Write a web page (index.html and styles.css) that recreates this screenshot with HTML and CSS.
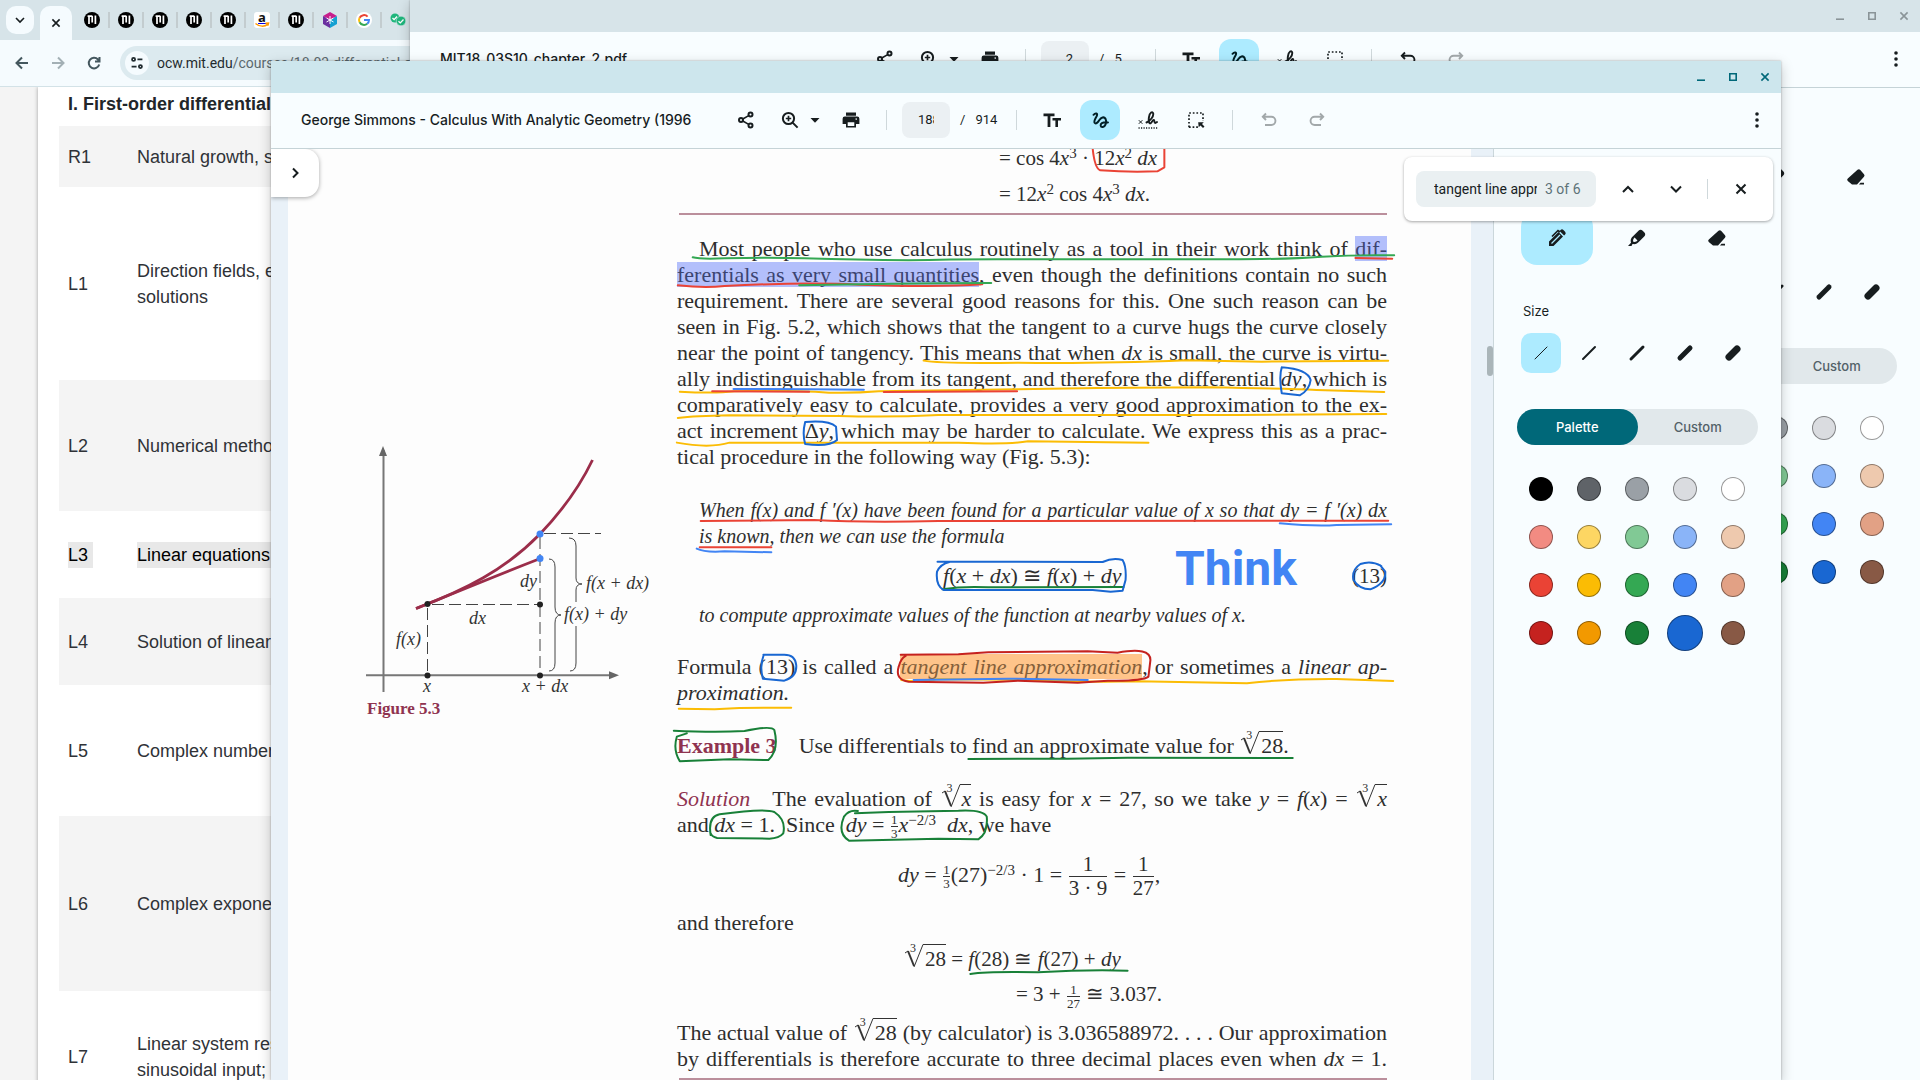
FILE: index.html
```html
<!DOCTYPE html>
<html lang="en">
<head>
<meta charset="utf-8">
<title>Desktop</title>
<link rel="stylesheet" href="styles.css">
</head>
<body>
<svg class="defs" aria-hidden="true">
  <symbol id="i-share" viewBox="0 0 20 20"><g fill="none" stroke="currentColor" stroke-width="2"><circle cx="14.5" cy="4.5" r="2"/><circle cx="14.5" cy="15.5" r="2"/><circle cx="5" cy="10" r="2"/><path d="M6.8 9L12.7 5.6M6.8 11l5.9 3.4" stroke-width="1.6"/></g></symbol>
  <symbol id="i-zoom" viewBox="0 0 20 20"><g fill="none" stroke="currentColor" stroke-width="2"><circle cx="8.5" cy="8.5" r="5.6"/><path d="M12.6 12.6l5 5"/><path d="M8.500 5.800v5.400M5.800 8.500h5.400" stroke-width="1.700"/></g></symbol>
  <symbol id="i-caret" viewBox="0 0 20 20"><path d="M5.500 8h9L10 12.800z" fill="currentColor"/></symbol>
  <symbol id="i-print" viewBox="0 0 20 20"><path fill="currentColor" fill-rule="evenodd" d="M5 2.500h10v3.200H5zM3.800 6.500h12.400a2.200 2.200 0 0 1 2.200 2.200V14H15v3.500H5V14H1.600V8.700a2.200 2.200 0 0 1 2.200-2.200zM6.700 12.300v3.600h6.600v-3.600zM15.200 8.300a.8.8 0 1 0 0 1.600.8.8 0 0 0 0-1.600z"/></symbol>
  <symbol id="i-text" viewBox="0 0 20 20"><path fill="currentColor" d="M1.500 3.500h11v2.800H8.400V17H5.600V6.300H1.500zM10.500 8H19v2.500h-3V17h-2.600v-6.500h-2.900z"/></symbol>
  <symbol id="i-draw" viewBox="0 0 20 20"><path fill="none" stroke="currentColor" stroke-width="2" stroke-linecap="round" d="M3.500 4.800C5.500 2.600 8 3.200 6.800 5.800 5.800 8 3.500 11 4.600 12.800c1.200 1.800 3.400-.6 4.800-2.800 1.800-2.600 4.600-3.600 6-1.400 1.600 2.900.3 8-2.600 8.400-2.600.3-2.800-2.600-.9-3.800 1.800-1.100 4.200-1.200 6.100-.8"/></symbol>
  <symbol id="i-sign" viewBox="0 0 20 20"><path fill="none" stroke="currentColor" stroke-width="1.900" stroke-linecap="round" d="M8.500 12.500c3.800-1.600 7.200-6 6.700-9-.5-2.600-3.600-1.200-4.300 4-.5 3.700.2 6.400 1.700 5.800 1.300-.6 1.900-3.200 3.200-3.400 1 0 .2 2.600 1.200 3 .6.200 1.200-.2 2-.8"/><path fill="none" stroke="currentColor" d="M.8 10.200l3.600 3.600M4.400 10.200L.8 13.800"/><path stroke="currentColor" stroke-width="1.300" stroke-dasharray="1.200 1.300" d="M.5 18h19"/></symbol>
  <symbol id="i-select" viewBox="0 0 20 20"><path fill="none" stroke="currentColor" stroke-width="1.700" stroke-dasharray="1.700 1.900" d="M3 17.200V3h14v8M3 17.200h9"/><path fill="currentColor" d="M12.200 12.200h5.600l-1.800 1.800 2.500 2.500-1.500 1.500-2.500-2.500-1.800 1.800z"/></symbol>
  <symbol id="i-undo" viewBox="0 0 20 20"><path fill="none" stroke="currentColor" stroke-width="1.900" d="M7 3.500L3.800 6.700 7 10M4 6.700h8.300a4.100 4.100 0 0 1 0 8.300H6"/></symbol>
  <symbol id="i-redo" viewBox="0 0 20 20"><path fill="none" stroke="currentColor" stroke-width="1.900" d="M13 3.500l3.200 3.200L13 10M16 6.700H7.700a4.100 4.100 0 0 0 0 8.300H14"/></symbol>
  <symbol id="i-more" viewBox="0 0 20 20"><g fill="currentColor"><circle cx="10" cy="4" r="1.800"/><circle cx="10" cy="10" r="1.800"/><circle cx="10" cy="16" r="1.800"/></g></symbol>
  <symbol id="i-min" viewBox="0 0 20 20"><path stroke="currentColor" stroke-width="2" d="M5 14h10"/></symbol>
  <symbol id="i-max" viewBox="0 0 20 20"><path fill="none" stroke="currentColor" stroke-width="2" d="M6 6h8v8H6z"/></symbol>
  <symbol id="i-close" viewBox="0 0 20 20"><path fill="none" stroke="currentColor" stroke-width="2" d="M5.500 5.500l9 9M14.500 5.500l-9 9"/></symbol>
  <symbol id="i-chev" viewBox="0 0 20 20"><path fill="none" stroke="currentColor" stroke-width="2" d="M8 5.500l4.500 4.500L8 14.500"/></symbol>
  <symbol id="i-up" viewBox="0 0 20 20"><path fill="none" stroke="currentColor" stroke-width="2" d="M5 13l5-5 5 5"/></symbol>
  <symbol id="i-down" viewBox="0 0 20 20"><path fill="none" stroke="currentColor" stroke-width="2" d="M5 7.500l5 5 5-5"/></symbol>
  <symbol id="i-pen" viewBox="0 0 20 20"><path fill="currentColor" d="M2 18v-4.500L11.500 4l4.500 4.500L6.500 18zM12.600 3l1-1a2 2 0 0 1 2.800 0l1.700 1.700a2 2 0 0 1 0 2.800l-1 1z"/><path fill="none" stroke="currentColor" stroke-width="1.700" d="M5 8.500l6-6 2 1.500"/><path stroke="#adebff" stroke-width="1.300" d="M4.500 15.500l8.500-8.500"/></symbol>
  <symbol id="i-marker" viewBox="0 0 20 20"><path fill="currentColor" fill-rule="evenodd" d="M1 18l3-3.200c-1-3.500.6-5.200 2-6.500l5.500-5.500a3 3 0 0 1 4.200 0l1.500 1.500a3 3 0 0 1 0 4.200L11.700 14c-1.300 1.300-3 2.600-6.200 2L4.500 18zM6.200 13.800c2.300.4 3.600-.6 4.300-1.300L7.600 9.600c-.9.900-1.900 2.200-1.400 4.200z"/></symbol>
  <symbol id="i-eraser" viewBox="0 0 20 20"><path fill="currentColor" d="M1.800 11.500l9.700-8.700a2 2 0 0 1 2.800.1l3.700 4.300a2 2 0 0 1 0 2.600L11 17.500H6L1.800 14a1.700 1.700 0 0 1 0-2.500zM14.500 15.800H18v1.700h-5z"/></symbol>
  <symbol id="fav-mit" viewBox="0 0 16 16"><circle cx="8" cy="8" r="8"/><path stroke="#fff" stroke-width="1.700" fill="none" d="M3.600 4.200h4.800M5 4v8M8.200 4v6.500M11.400 3.500v8.500"/></symbol>
  <symbol id="i-root" viewBox="0 0 22 24"><path fill="none" stroke="#333" d="M2 9l3-2"/><path fill="none" stroke="#333" stroke-width="2" d="M5 7l6 15"/><path fill="none" stroke="#333" d="M11 23L20 .5h2"/></symbol>
</svg>

<div class="desktop">
  <section class="browser">
    <nav class="tabs" aria-label="Tabs">
      <button class="tabsearch" aria-label="Search tabs"><svg class="ic"><use href="#i-down"/></svg></button>
      <button class="tab-active" aria-label="Close tab"><svg class="ic"><use href="#i-close"/></svg></button>
      <a class="tab" href="#" aria-label="MIT OCW"><svg class="fav"><use href="#fav-mit"/></svg></a>
      <a class="tab" href="#" aria-label="MIT OCW"><svg class="fav"><use href="#fav-mit"/></svg></a>
      <a class="tab" href="#" aria-label="MIT OCW"><svg class="fav"><use href="#fav-mit"/></svg></a>
      <a class="tab" href="#" aria-label="MIT OCW"><svg class="fav"><use href="#fav-mit"/></svg></a>
      <a class="tab" href="#" aria-label="MIT OCW"><svg class="fav"><use href="#fav-mit"/></svg></a>
      <a class="tab" href="#" aria-label="Amazon"><span class="fav amazon">a<svg viewBox="0 0 16 16"><path fill="none" stroke="#f90" stroke-width="1.500" d="M1.500 11.500c4 3.400 9 3.400 12.500.6M11.500 11.300l3-.3-.6 2.600"/></svg></span></a>
      <a class="tab" href="#" aria-label="MIT OCW"><svg class="fav"><use href="#fav-mit"/></svg></a>
      <a class="tab" href="#" aria-label="Cube"><svg class="fav" viewBox="0 0 16 16"><path fill="#c81e8c" d="M8 0l7 4-7 4-7-4z"/><path fill="#6a2fa0" d="M1 4l7 4v8l-7-4z"/><path fill="#14a0d2" d="M15 4L8 8v8l7-4z"/><path stroke="#fff" d="M8 4v8M4.500 6l7 4M11.500 6l-7 4"/></svg></a>
      <a class="tab" href="#" aria-label="Google"><svg class="fav" viewBox="0 0 16 16"><circle cx="8" cy="8" r="8" fill="#fff"/><g fill="none" stroke-width="2"><path stroke="#ea4335" d="M11.600 4.600A5 5 0 0 0 3.600 5.800"/><path stroke="#fbbc04" d="M3.600 5.700a5 5 0 0 0 0 4.600"/><path stroke="#34a853" d="M3.600 10.200a5 5 0 0 0 7.600 1.600"/><path stroke="#4285f4" d="M11.200 11.800A5 5 0 0 0 13 8H8"/></g></svg></a>
      <a class="tab" href="#" aria-label="Checks"><svg class="fav" viewBox="0 0 16 16"><circle cx="5" cy="6" r="4.500" fill="#1fb67c"/><circle cx="11" cy="9" r="4.800" fill="#1fb67c" stroke="#d7e4e9" stroke-width=".6"/><path fill="none" stroke="#fff" stroke-width="1.300" d="M2.500 6l1.600 1.600L7 4.500M8.500 9.200l1.800 1.700L13.500 7.500"/></svg></a>
    </nav>
    <div class="navbar">
      <button class="nav-btn" aria-label="Back"><svg class="ic" viewBox="0 0 20 20"><path fill="none" stroke="#44575e" stroke-width="2" d="M16 10H5M10 4.500L4.500 10l5.500 5.500"/></svg></button>
      <button class="nav-btn" aria-label="Forward"><svg class="ic" viewBox="0 0 20 20"><path fill="none" stroke="#a3b0b5" stroke-width="2" d="M4 10h11M10 4.500l5.500 5.500-5.500 5.500"/></svg></button>
      <button class="nav-btn" aria-label="Reload"><svg class="ic" viewBox="0 0 20 20"><path fill="none" stroke="#44575e" stroke-width="2" d="M15.200 11.500A5.300 5.300 0 1 1 14 6.500L15.500 8M15.500 4v4.500H11"/></svg></button>
      <div class="omnibox"><span class="site"><svg class="ic" viewBox="0 0 20 20"><g fill="none" stroke="#1f2a2e" stroke-width="2"><circle cx="6.200" cy="6" r="1.700"/><path d="M10.500 6H16M4 14h5.500"/><circle cx="13.800" cy="14" r="1.700"/></g></svg></span><span class="url"><b>ocw.mit.edu</b>/courses/18-03-differential-equations</span></div>
    </div>
    <main class="web">
      <div class="sheet">
        <h2>I. First-order differential equations</h2>
        <table>
          <tr class="h61"><th>R1</th><td>Natural growth, separable equations</td></tr>
          <tr class="h193"><th>L1</th><td>Direction fields, existence and uniqueness of<br>solutions</td></tr>
          <tr class="h131"><th>L2</th><td>Numerical methods</td></tr>
          <tr class="h87"><th><mark>L3&nbsp;</mark></th><td><mark>Linear equations, models</mark></td></tr>
          <tr class="h87"><th>L4</th><td>Solution of linear equations</td></tr>
          <tr class="h131"><th>L5</th><td>Complex numbers, roots of unity</td></tr>
          <tr class="h175"><th>L6</th><td>Complex exponentials</td></tr>
          <tr class="h131"><th>L7</th><td>Linear system response to exponential and<br>sinusoidal input; gain</td></tr>
        </table>
      </div>
    </main>
  </section>

  <section class="win win-back">
    <header class="titlebar"><button aria-label="Minimize"><svg class="ic"><use href="#i-min"/></svg></button><button aria-label="Maximize"><svg class="ic"><use href="#i-max"/></svg></button><button aria-label="Close"><svg class="ic"><use href="#i-close"/></svg></button></header>
    <div class="toolbar">
      <h1>MIT18_03S10_chapter_2.pdf</h1>
      <button class="tb" aria-label="Share"><svg class="ic"><use href="#i-share"/></svg></button>
      <button class="tb zoom" aria-label="Zoom"><svg class="ic"><use href="#i-zoom"/></svg><svg class="ic"><use href="#i-caret"/></svg></button>
      <button class="tb" aria-label="Print"><svg class="ic"><use href="#i-print"/></svg></button>
      <i class="sep"></i>
      <label class="pager"><input aria-label="Page" value="2"><span>/</span><span>5</span></label>
      <i class="sep"></i>
      <div class="modes"><button class="tb" aria-label="Select text"><svg class="ic"><use href="#i-text"/></svg></button><button class="tb on" aria-label="Annotate"><svg class="ic"><use href="#i-draw"/></svg></button><button class="tb" aria-label="Sign"><svg class="ic"><use href="#i-sign"/></svg></button><button class="tb" aria-label="Select area"><svg class="ic"><use href="#i-select"/></svg></button></div>
      <i class="sep"></i>
      <div class="modes"><button class="tb" aria-label="Undo"><svg class="ic"><use href="#i-undo"/></svg></button><button class="tb off" aria-label="Redo"><svg class="ic"><use href="#i-redo"/></svg></button></div>
      <button class="tb more" aria-label="More"><svg class="ic"><use href="#i-more"/></svg></button>
    </div>
    <div class="viewer">
      <div class="scroller"></div>
      <aside class="panel">
        <div class="tools"><button class="on" aria-label="Pen"><svg class="ic"><use href="#i-pen"/></svg></button><button aria-label="Highlighter"><svg class="ic"><use href="#i-marker"/></svg></button><button aria-label="Eraser"><svg class="ic"><use href="#i-eraser"/></svg></button></div>
        <h3>Size</h3>
        <div class="sizes"><button class="on" aria-label="Size 1"><svg class="ic s1"><path d="M4 16L16 4"/></svg></button><button aria-label="Size 2"><svg class="ic s2"><path d="M4 16L16 4"/></svg></button><button aria-label="Size 3"><svg class="ic s3"><path d="M4 16L16 4"/></svg></button><button aria-label="Size 4"><svg class="ic s4"><path d="M5 15L15 5"/></svg></button><button aria-label="Size 5"><svg class="ic s5"><path d="M6 14L14 6"/></svg></button></div>
        <div class="seg"><button class="on">Palette</button><button>Custom</button></div>
        <div class="swatches">
          <input type="radio" name="b" aria-label="Black" class="c1"><input type="radio" name="b" aria-label="Dark grey" class="c2"><input type="radio" name="b" aria-label="Grey" class="c3"><input type="radio" name="b" aria-label="Light grey" class="c4"><input type="radio" name="b" aria-label="White" class="c5">
          <input type="radio" name="b" aria-label="Light red" class="c6"><input type="radio" name="b" aria-label="Light yellow" class="c7"><input type="radio" name="b" aria-label="Light green" class="c8"><input type="radio" name="b" aria-label="Light blue" class="c9"><input type="radio" name="b" aria-label="Light tan" class="c10">
          <input type="radio" name="b" aria-label="Red" class="c11"><input type="radio" name="b" aria-label="Yellow" class="c12"><input type="radio" name="b" aria-label="Green" class="c13"><input type="radio" name="b" aria-label="Blue" class="c14"><input type="radio" name="b" aria-label="Tan" class="c15">
          <input type="radio" name="b" aria-label="Dark red" class="c16"><input type="radio" name="b" aria-label="Orange" class="c17"><input type="radio" name="b" aria-label="Dark green" class="c18"><input type="radio" name="b" aria-label="Dark blue" class="c19"><input type="radio" name="b" aria-label="Brown" class="c20">
        </div>
      </aside>
    </div>
  </section>

  <section class="win win-front">
    <header class="titlebar"><button aria-label="Minimize"><svg class="ic"><use href="#i-min"/></svg></button><button aria-label="Maximize"><svg class="ic"><use href="#i-max"/></svg></button><button aria-label="Close"><svg class="ic"><use href="#i-close"/></svg></button></header>
    <div class="toolbar">
      <h1>George Simmons - Calculus With Analytic Geometry (1996</h1>
      <button class="tb" aria-label="Share"><svg class="ic"><use href="#i-share"/></svg></button>
      <button class="tb zoom" aria-label="Zoom"><svg class="ic"><use href="#i-zoom"/></svg><svg class="ic"><use href="#i-caret"/></svg></button>
      <button class="tb" aria-label="Print"><svg class="ic"><use href="#i-print"/></svg></button>
      <i class="sep"></i>
      <label class="pager"><input aria-label="Page" value="188"><span>/</span><span>914</span></label>
      <i class="sep"></i>
      <div class="modes"><button class="tb" aria-label="Select text"><svg class="ic"><use href="#i-text"/></svg></button><button class="tb on" aria-label="Annotate"><svg class="ic"><use href="#i-draw"/></svg></button><button class="tb" aria-label="Sign"><svg class="ic"><use href="#i-sign"/></svg></button><button class="tb" aria-label="Select area"><svg class="ic"><use href="#i-select"/></svg></button></div>
      <i class="sep"></i>
      <div class="modes"><button class="tb off" aria-label="Undo"><svg class="ic"><use href="#i-undo"/></svg></button><button class="tb off" aria-label="Redo"><svg class="ic"><use href="#i-redo"/></svg></button></div>
      <button class="tb more" aria-label="More"><svg class="ic"><use href="#i-more"/></svg></button>
    </div>
    <div class="viewer">
      <div class="scroller">
        <article class="page">
          <figure>
            <svg class="plot" viewBox="0 0 320 275">
              <g stroke="#777" stroke-width="2"><path d="M43.500 30V272M26 255.300H272"/></g>
              <path fill="#666" d="M43 26l4 10h-8zM279 255.300l-10 4v-8z"/>
              <g fill="none" stroke="#444" stroke-dasharray="12 5"><path d="M92 184.500H200M87.500 188V255M200 117V255M204 113.500H261"/></g>
              <g fill="none" stroke="#9b2d4a" stroke-width="2.800"><path d="M76 188.500C125 170 165 150 200 114C222 91 240 66 252.500 40"/><path d="M76 188.500C100 179 140 162 199 139"/></g>
              <g fill="none" stroke="#444"><path d="M209 139q6 0 6 8v40q0 8 6 8-6 0-6 8v40q0 8-6 8"/><path d="M229 118q7 0 7 8v32q0 6 6 6-6 0-6 6v12M236 206v37q0 8-6 8"/></g>
              <g fill="#222"><circle cx="87.500" cy="184" r="3"/><circle cx="200" cy="184.500" r="3"/><circle cx="87.500" cy="255.500" r="3"/><circle cx="200" cy="255.500" r="3"/></g>
              <g fill="#4285f4"><circle cx="200" cy="114" r="3.500"/><circle cx="200" cy="138.500" r="3.500"/></g>
              <g class="plot-text"><text x="180" y="167">dy</text><text x="129" y="204">dx</text><text x="56" y="225">f(x)</text><text x="246" y="169">f(x + dx)</text><text x="224" y="200">f(x) + dy</text><text x="83" y="272">x</text><text x="182" y="272">x + dx</text></g>
            </svg>
            <figcaption>Figure 5.3</figcaption>
          </figure>
          <div class="column">
            <p class="eq e-cos">= cos 4<i>x</i><sup>3</sup> · 12<i>x</i><sup>2</sup> <i>dx</i></p>
            <p class="eq e-cos g10">= 12<i>x</i><sup>2</sup> cos 4<i>x</i><sup>3</sup> <i>dx</i>.</p>
            <hr>
            <p class="g21 just"><span class="indent">Most people who use calculus routinely as a tool in their work think of <mark class="blue">dif-</mark></span><span><mark class="blue">ferentials as very small quantities</mark>, even though the definitions contain no such</span><span>requirement. There are several good reasons for this. One such reason can be</span><span>seen in Fig. 5.2, which shows that the tangent to a curve hugs the curve closely</span><span>near the point of tangency. This means that when <i>dx</i> is small, the curve is virtu-</span><span>ally indistinguishable from its tangent, and therefore the differential <i>dy</i>, which is</span><span>comparatively easy to calculate, provides a very good approximation to the ex-</span><span>act increment Δ<i>y</i>, which may be harder to calculate. We express this as a prac-</span><span class="last">tical procedure in the following way (Fig. 5.3):</span></p>
            <p class="just hyp g27"><span>When f(x) and f ′(x) have been found for a particular value of x so that dy = f ′(x) dx</span><span class="last">is known, then we can use the formula</span></p>
            <div class="formula g14"><p class="eq wide"><i>f</i>(<i>x</i> + <i>dx</i>) ≅ <i>f</i>(<i>x</i>) + <i>dy</i></p><strong>Think</strong><span class="eq">(13)</span></div>
            <p class="hyp g13">to compute approximate values of the function at nearby values of x.</p>
            <p class="just g26"><span>Formula (13) is called a <mark class="orange"><i>tangent line approximation</i></mark>, or sometimes a <i>linear ap-</i></span><span class="last"><i>proximation.</i></span></p>
            <p class="g27 line"><b class="wine">Example 3</b><span class="em">Use differentials to find an approximate value for <sup class="idx">3</sup><svg class="root"><use href="#i-root"/></svg><span class="bar">28</span>.</span></p>
            <p class="just g27"><span><i class="wine soln">Solution</i>The evaluation of <sup class="idx">3</sup><svg class="root"><use href="#i-root"/></svg><span class="bar"><i>x</i></span> is easy for <i>x</i> = 27, so we take <i>y</i> = <i>f</i>(<i>x</i>) = <sup class="idx">3</sup><svg class="root"><use href="#i-root"/></svg><span class="bar"><i>x</i></span></span><span class="last">and <i>dx</i> = 1.&nbsp; Since&nbsp; <i>dy</i> = <span class="frac"><span>1</span><span>3</span></span><i>x</i><sup>−2/3</sup>&nbsp; <i>dx</i>, we have</span></p>
            <p class="eq wide e-dy g24"><i>dy</i> = <span class="frac"><span>1</span><span>3</span></span>(27)<sup>−2/3</sup> · 1 = <span class="frac big"><span>1</span><span>3 · 9</span></span> = <span class="frac big"><span>1</span><span>27</span></span>,</p>
            <p class="line g22">and therefore</p>
            <p class="eq e-root g10"><sup class="idx">3</sup><svg class="root"><use href="#i-root"/></svg><span class="bar">28</span> = <i>f</i>(28) ≅ <i>f</i>(27) + <i>dy</i></p>
            <p class="eq e-three g9">= 3 + <span class="frac"><span>1</span><span>27</span></span> ≅ 3.037.</p>
            <p class="just g13"><span>The actual value of <sup class="idx">3</sup><svg class="root"><use href="#i-root"/></svg><span class="bar">28</span> (by calculator) is 3.036588972. . . . Our approximation</span><span>by differentials is therefore accurate to three decimal places even when <i>dx</i> = 1.</span></p>
            <hr>
          </div>
          <svg class="ink" viewBox="288 149 1183 931" aria-hidden="true">
            <g transform="translate(640 130) scale(.4975 .3333)">
              <path class="red" d="M910 57Q914 115 925 121Q985 128 1040 124L1054 112V57M1438 384L1512 386M76 466Q130 475 170 468Q330 456 440 464Q600 472 688 463"/>
              <path class="green" d="M106 382Q120 388 170 385Q260 382 330 385Q440 390 540 391Q650 386 800 388L1180 388Q1300 388 1370 380Q1440 374 1516 376M320 466Q500 460 706 459"/>
              <path class="amber" d="M570 692Q600 701 760 698Q900 702 1100 691L1250 695L1504 692M80 785Q150 791 190 784Q300 780 380 788Q430 790 480 784L760 778L920 774L1140 772Q1300 776 1360 780L1496 786M76 864Q110 858 180 856L400 858Q500 863 600 855L1200 855L1500 852M74 938Q140 956 180 938L640 938Q740 944 780 934L1022 938"/>
              <path class="red" d="M145 784L340 785M490 786L758 784"/>
              <path class="sky" d="M188 777L345 778L450 779"/>
              <path class="blue" d="M1290 712Q1342 718 1348 750Q1346 780 1326 796L1290 790Q1284 740 1290 712M332 876Q380 870 394 890L396 930Q380 952 332 942Q326 910 332 876"/>
            </g>
            <g transform="translate(640 460) scale(.4975 .3333)">
              <path class="red" d="M122 183L350 180Q450 188 600 183L1504 182M120 262H264"/>
              <path class="sky" d="M1286 190Q1360 200 1400 195L1510 193M114 266Q130 278 170 274L264 277"/>
              <path class="green2" d="M608 388Q650 378 700 382L972 381"/>
              <path class="blue" d="M598 305L930 306Q950 292 970 300Q978 320 976 360L970 392L946 395L910 390L610 390Q594 376 597 335Q604 312 622 306M1490 318Q1470 300 1448 312Q1430 330 1434 360Q1446 388 1468 388Q1500 370 1498 335L1488 316M248 588Q240 620 247 656L290 662Q316 650 314 615Q312 584 290 584L248 584"/>
              <path class="amber" d="M525 660Q560 668 600 658L800 660Q900 668 1000 664L1220 670Q1300 656 1400 657L1514 663M78 746L150 748L200 744L304 743"/>
              <path class="sky" d="M550 660L740 656L900 660"/>
              <path class="crimson" d="M524 584L640 583L700 577L900 574L960 578Q1026 560 1026 600L1022 650Q1010 664 940 662L880 668L760 662L690 668L540 665Q512 660 520 620Q524 596 534 588"/>
            </g>
            <g transform="translate(640 720) scale(.4975 .3333)">
              <path class="green2" d="M68 32Q150 38 210 33Q264 16 270 30Q280 90 258 120L180 118L80 124Q66 90 74 50L94 40M660 117L860 116L980 113L1312 114M142 345Q136 290 160 283Q250 264 270 276Q294 300 288 340Q280 354 260 356L155 354Q144 350 142 340M438 273Q420 268 410 290Q396 340 420 362L600 356L680 358Q700 340 697 290Q690 268 640 272L500 276L432 280M664 762Q700 754 800 757Q900 748 980 752"/>
            </g>
          </svg>
        </article>
        <i class="thumb"></i>
      </div>
      <aside class="panel">
        <div class="tools"><button class="on" aria-label="Pen"><svg class="ic"><use href="#i-pen"/></svg></button><button aria-label="Highlighter"><svg class="ic"><use href="#i-marker"/></svg></button><button aria-label="Eraser"><svg class="ic"><use href="#i-eraser"/></svg></button></div>
        <h3>Size</h3>
        <div class="sizes"><button class="on" aria-label="Size 1"><svg class="ic s1"><path d="M4 16L16 4"/></svg></button><button aria-label="Size 2"><svg class="ic s2"><path d="M4 16L16 4"/></svg></button><button aria-label="Size 3"><svg class="ic s3"><path d="M4 16L16 4"/></svg></button><button aria-label="Size 4"><svg class="ic s4"><path d="M5 15L15 5"/></svg></button><button aria-label="Size 5"><svg class="ic s5"><path d="M6 14L14 6"/></svg></button></div>
        <div class="seg"><button class="on">Palette</button><button>Custom</button></div>
        <div class="swatches">
          <input type="radio" name="f" aria-label="Black" class="c1"><input type="radio" name="f" aria-label="Dark grey" class="c2"><input type="radio" name="f" aria-label="Grey" class="c3"><input type="radio" name="f" aria-label="Light grey" class="c4"><input type="radio" name="f" aria-label="White" class="c5">
          <input type="radio" name="f" aria-label="Light red" class="c6"><input type="radio" name="f" aria-label="Light yellow" class="c7"><input type="radio" name="f" aria-label="Light green" class="c8"><input type="radio" name="f" aria-label="Light blue" class="c9"><input type="radio" name="f" aria-label="Light tan" class="c10">
          <input type="radio" name="f" aria-label="Red" class="c11"><input type="radio" name="f" aria-label="Yellow" class="c12"><input type="radio" name="f" aria-label="Green" class="c13"><input type="radio" name="f" aria-label="Blue" class="c14"><input type="radio" name="f" aria-label="Tan" class="c15">
          <input type="radio" name="f" aria-label="Dark red" class="c16"><input type="radio" name="f" aria-label="Orange" class="c17"><input type="radio" name="f" aria-label="Dark green" class="c18"><input type="radio" name="f" aria-label="Dark blue" class="c19" checked><input type="radio" name="f" aria-label="Brown" class="c20">
        </div>
      </aside>
      <button class="expand" aria-label="Open side bar"><svg class="ic"><use href="#i-chev"/></svg></button>
      <form class="find"><label class="findbox"><input aria-label="Find" value="tangent line approximation"><span>3 of 6</span></label><button type="button" aria-label="Previous"><svg class="ic"><use href="#i-up"/></svg></button><button type="button" aria-label="Next"><svg class="ic"><use href="#i-down"/></svg></button><i class="sep"></i><button type="button" aria-label="Close find"><svg class="ic"><use href="#i-close"/></svg></button></form>
    </div>
  </section>
</div>
</body>
</html>
```
FILE: styles.css
```css
* { box-sizing: border-box; }
html, body { height: 100%; margin: 0; }
body { overflow: hidden; font: 14px/20px Inter, Roboto, sans-serif; color: #171d1f; }
h1, h2, h3, p, figure { margin: 0; }
button { border: 0; padding: 0; background: none; color: inherit; font: inherit; display: flex; align-items: center; justify-content: center; }
.defs { display: none; }
.ic { width: 20px; height: 20px; flex: none; display: block; }
.desktop { position: relative; height: 100%; overflow: hidden; }

/* browser window */
.browser { height: 100%; display: flex; flex-direction: column; background: #f4f4f4; }
.tabs { height: 40px; background: #d7e4e9; display: flex; align-items: center; padding-left: 6px; flex: none; }
.tabsearch { width: 28px; height: 28px; border-radius: 10px; background: #f5fbfe; margin-right: 6px; }
.tab-active { width: 32px; height: 34px; align-self: flex-end; border-radius: 10px 10px 0 0; background: #f5fbfe; margin-right: 4px; }
.tabs .ic { width: 16px; height: 16px; }
.tab { width: 34px; height: 16px; display: flex; align-items: center; justify-content: center; border-right: 2px solid #c3cccf; }
.fav { width: 16px; height: 16px; display: block; }
.amazon { position: relative; background: #fff; border-radius: 3px; color: #111; font: bold 13px/10px "Open Sans", sans-serif; text-align: center; }
.amazon svg { position: absolute; inset: 0; }
.navbar { height: 47px; background: #f5fbfe; border-bottom: 1px solid #d3e2e7; display: flex; align-items: center; padding-left: 4px; flex: none; }
.nav-btn { width: 36px; height: 36px; }
.omnibox { flex: 1; height: 34px; margin-left: 8px; border-radius: 17px; background: #dceaef; display: flex; align-items: center; padding-left: 5px; font: 14px/20px Roboto, sans-serif; color: #5b686d; white-space: nowrap; }
.site { width: 24px; height: 24px; border-radius: 12px; background: #f5fbfe; display: flex; align-items: center; justify-content: center; margin-right: 8px; }
.site .ic { width: 18px; height: 18px; }
.url b { font-weight: 400; color: #1f2a2e; }
.web { flex: 1; min-height: 0; overflow: hidden; padding-left: 38px; }
.sheet { background: #fff; box-shadow: 0 0 4px rgba(0,0,0,.35); padding-left: 21px; font: 18px/26px "Liberation Sans", Arial, sans-serif; color: #2f3237; }
.sheet h2 { font-size: 18px; line-height: 26px; padding: 4px 0 9px 9px; color: #22262a; }
.sheet table { border-collapse: collapse; width: 100%; }
.sheet th, .sheet td { padding: 0 9px; vertical-align: middle; text-align: left; font-weight: 400; }
.sheet th { width: 69px; }
.sheet mark { background: #e8e8e8; color: #000; display: inline-block; }
.sheet tr:nth-child(odd) { background: #f4f4f4; }
.h61 { height: 61px; } .h87 { height: 87px; } .h131 { height: 131px; } .h175 { height: 175px; } .h193 { height: 193px; }

/* document windows */
.win { position: absolute; bottom: 0; display: flex; flex-direction: column; background: #f8fdff; box-shadow: 0 0 2px rgba(0,0,0,.3), 0 4px 12px rgba(0,0,0,.22); }
.win-back { left: 410px; right: 0; top: 0; }
.win-front { left: 271px; right: 139px; top: 61px; }
.titlebar { height: 32px; flex: none; display: flex; justify-content: flex-end; align-items: center; background: #d7e4e9; color: #8a9498; }
.win-front .titlebar { background: #cde6ed; color: #006879; }
.titlebar button { width: 32px; height: 32px; }
.titlebar .ic { width: 16px; height: 16px; }
.toolbar { height: 56px; flex: none; display: flex; align-items: center; border-bottom: 1px solid #c5d3d7; padding: 0 4px 2px 30px; }
.toolbar h1 { width: 392px; margin-right: 33px; font-size: 14px; font-weight: 500; white-space: nowrap; overflow: hidden; }
.tb { width: 40px; height: 40px; flex: none; border-radius: 12px; }
.tb.on { background: #adebff; color: #001f26; }
.tb.off { color: #a2a8aa; }
.zoom { width: 58px; margin: 0 3px 0 4px; justify-content: flex-start; padding-left: 10px; gap: 5px; }
.sep { width: 1px; height: 20px; flex: none; background: #cfd8db; }
.toolbar > .sep { margin: 0 15px; }
.toolbar > .modes + .sep { margin: 0 16px; }
.pager { width: 99px; display: flex; align-items: center; gap: 10px; font: 13px/20px Roboto, sans-serif; }
.pager input { width: 48px; height: 36px; border: 0; border-radius: 8px; background: #ebf0f3; padding: 0 16px; font: inherit; color: inherit; text-align: right; }
.modes { display: flex; gap: 8px; }
.more { margin-left: auto; }
.viewer { flex: 1; min-height: 0; display: flex; position: relative; overflow: hidden; }
.scroller { flex: 1; min-width: 0; display: flex; background: #e9f1f8; padding: 0 22px 0 17px; position: relative; overflow: hidden; }
.thumb { position: absolute; right: 0; top: 197px; width: 6px; height: 30px; border-radius: 3px; background: #aab5b9; }

.panel { width: 288px; flex: none; border-left: 1px solid #cbd7db; padding: 62px 23px 0; }
.tools { display: flex; gap: 8px; padding-left: 4px; }
.tools button { width: 72px; height: 54px; border-radius: 16px; }
.panel .on { background: #adebff; }
.panel h3 { font-size: 13px; line-height: 20px; font-weight: 400; margin: 36px 0 12px 6px; }
.sizes { display: flex; gap: 8px; padding-left: 4px; }
.sizes button { width: 40px; height: 40px; border-radius: 10px; }
.sizes path { stroke: #171d1f; stroke-linecap: round; }
.s1 path { stroke-width: 1; } .s2 path { stroke-width: 2; } .s3 path { stroke-width: 3; } .s4 path { stroke-width: 5; } .s5 path { stroke-width: 7; }
.seg { display: flex; margin-top: 36px; border-radius: 18px; background: #e1e8eb; color: #526168; font-weight: 500; font-size: 13px; }
.seg button { flex: 1; height: 36px; border-radius: 18px; }
.panel .seg .on { background: #006879; color: #fff; }
.swatches { display: grid; grid-template-columns: repeat(5, 48px); grid-auto-rows: 48px; place-items: center; margin-top: 20px; }
.swatches input { appearance: none; margin: 0; width: 24px; height: 24px; border-radius: 50%; border: 1px solid rgba(0,0,0,.4); }
.swatches input:checked { width: 36px; height: 36px; }
.c1 { background: #000; } .c2 { background: #5f6368; } .c3 { background: #9aa0a6; } .c4 { background: #dadce0; } .c5 { background: #fff; }
.c6 { background: #f28b82; } .c7 { background: #fdd663; } .c8 { background: #81c995; } .c9 { background: #8ab4f8; } .c10 { background: #eec9ae; }
.c11 { background: #ea4335; } .c12 { background: #fbbc04; } .c13 { background: #34a853; } .c14 { background: #4285f4; } .c15 { background: #e2a185; }
.c16 { background: #c5221f; } .c17 { background: #f29900; } .c18 { background: #188038; } .c19 { background: #1967d2; } .c20 { background: #885945; }

.expand { position: absolute; left: 0; top: 0; width: 48px; height: 48px; background: #fff; border-radius: 0 14px 14px 0; box-shadow: 0 1px 4px rgba(0,0,0,.35); }
.find { position: absolute; right: 8px; top: 8px; height: 64px; width: 369px; display: flex; align-items: center; background: #fff; border-radius: 8px; box-shadow: 0 1px 3px rgba(0,0,0,.35); padding-left: 12px; }
.findbox { width: 180px; height: 36px; border-radius: 8px; background: #eaf0f2; display: flex; align-items: center; gap: 8px; padding-left: 18px; font: 14px/20px Roboto, sans-serif; color: #5d7278; white-space: nowrap; margin-right: 16px; }
.findbox input { width: 103px; border: 0; padding: 0; background: none; font: inherit; color: #171d1f; }
.find button { width: 32px; height: 32px; }
.find button + button { margin: 0 15px 0 16px; }
.find .sep + button { margin-left: 17px; }

/* book page */
.page { flex: 1; position: relative; display: flex; background: #fdfdfd; overflow: hidden; font: 22px/26px "Liberation Serif", "Times New Roman", serif; color: #2e2e2e; }
.page figure { width: 389px; flex: none; padding: 271px 0 0 52px; }
.plot { display: block; width: 320px; height: 275px; }
.plot-text { font: italic 18px "Liberation Serif", serif; fill: #333; }
figcaption { font-size: 17px; line-height: 20px; font-weight: 700; color: #8f3350; padding: 4px 0 0 27px; }
.column { width: 710px; flex: none; margin-top: -4px; }
.column p, .column p.just > span { height: 26px; white-space: nowrap; }
.column p.just { height: auto; }
.column p.just > span { display: block; text-align-last: justify; }
.column p.just > .last { text-align-last: left; }
.column .indent { padding-left: 22px; }
.eq { font-size: 21px; }
.eq.wide { font-size: 22px; }
.column hr { border: 0; height: 2px; margin: 6px 0 0 2px; background: #bb8f9c; }
.hyp { font-size: 20px; font-style: italic; padding-left: 22px; }
.page sup { font-size: 15px; line-height: 0; vertical-align: 7px; }
.page .idx { font-size: 12px; vertical-align: 14px; margin: 0 -13px 0 7px; }
.e-cos { padding-left: 322px; } .e-dy { padding-left: 221px; } .e-root { padding-left: 226px; } .e-three { padding-left: 339px; }
.g9 { margin-top: 9px; } .g10 { margin-top: 10px; } .g13 { margin-top: 13px; } .g14 { margin-top: 14px; }
.g21 { margin-top: 21px; } .g22 { margin-top: 22px; } .g24 { margin-top: 24px; } .g26 { margin-top: 26px; } .g27 { margin-top: 27px; }
.column p.g9 { margin-top: 9px; } .column p.g10 { margin-top: 10px; } .column p.g13 { margin-top: 13px; } .column p.g21 { margin-top: 21px; }
.page mark.blue { background: #b3bffb; color: #3c4470; }
.page mark.orange { background: #ffc48a; color: #85603a; }
.formula { display: flex; height: 26px; padding-left: 266px; }
.formula p { width: 232px; }
.formula strong { flex: 1; font: 700 48px/12px Roboto, sans-serif; color: #4285f4; }
.wine { color: #8f3350; }
.line .em { margin-left: 22px; }
.soln { margin-right: 22px; }
.root { width: 22px; height: 24px; vertical-align: -2px; margin-top: -6px; }
.bar { display: inline-block; border-top: 1px solid #333; line-height: 28px; margin: -6px 0; }
.frac { display: inline-flex; flex-direction: column; vertical-align: middle; text-align: center; text-align-last: center; font-size: 13px; line-height: 13px; margin: -10px 1px; }
.frac span + span { border-top: 1px solid #333; }
.frac.big { font-size: 21px; line-height: 23px; margin: -20px 1px; }
.ink { position: absolute; left: 0; top: 0; width: 1183px; height: 931px; }
.ink path { fill: none; stroke-width: 2; stroke-linecap: round; stroke-linejoin: round; vector-effect: non-scaling-stroke; }
.red { stroke: #ea4335; } .green { stroke: #34a853; } .green2 { stroke: #188038; } .amber { stroke: #fbbc04; } .sky { stroke: #4285f4; } .blue { stroke: #1967d2; } .crimson { stroke: #c5221f; }
```
